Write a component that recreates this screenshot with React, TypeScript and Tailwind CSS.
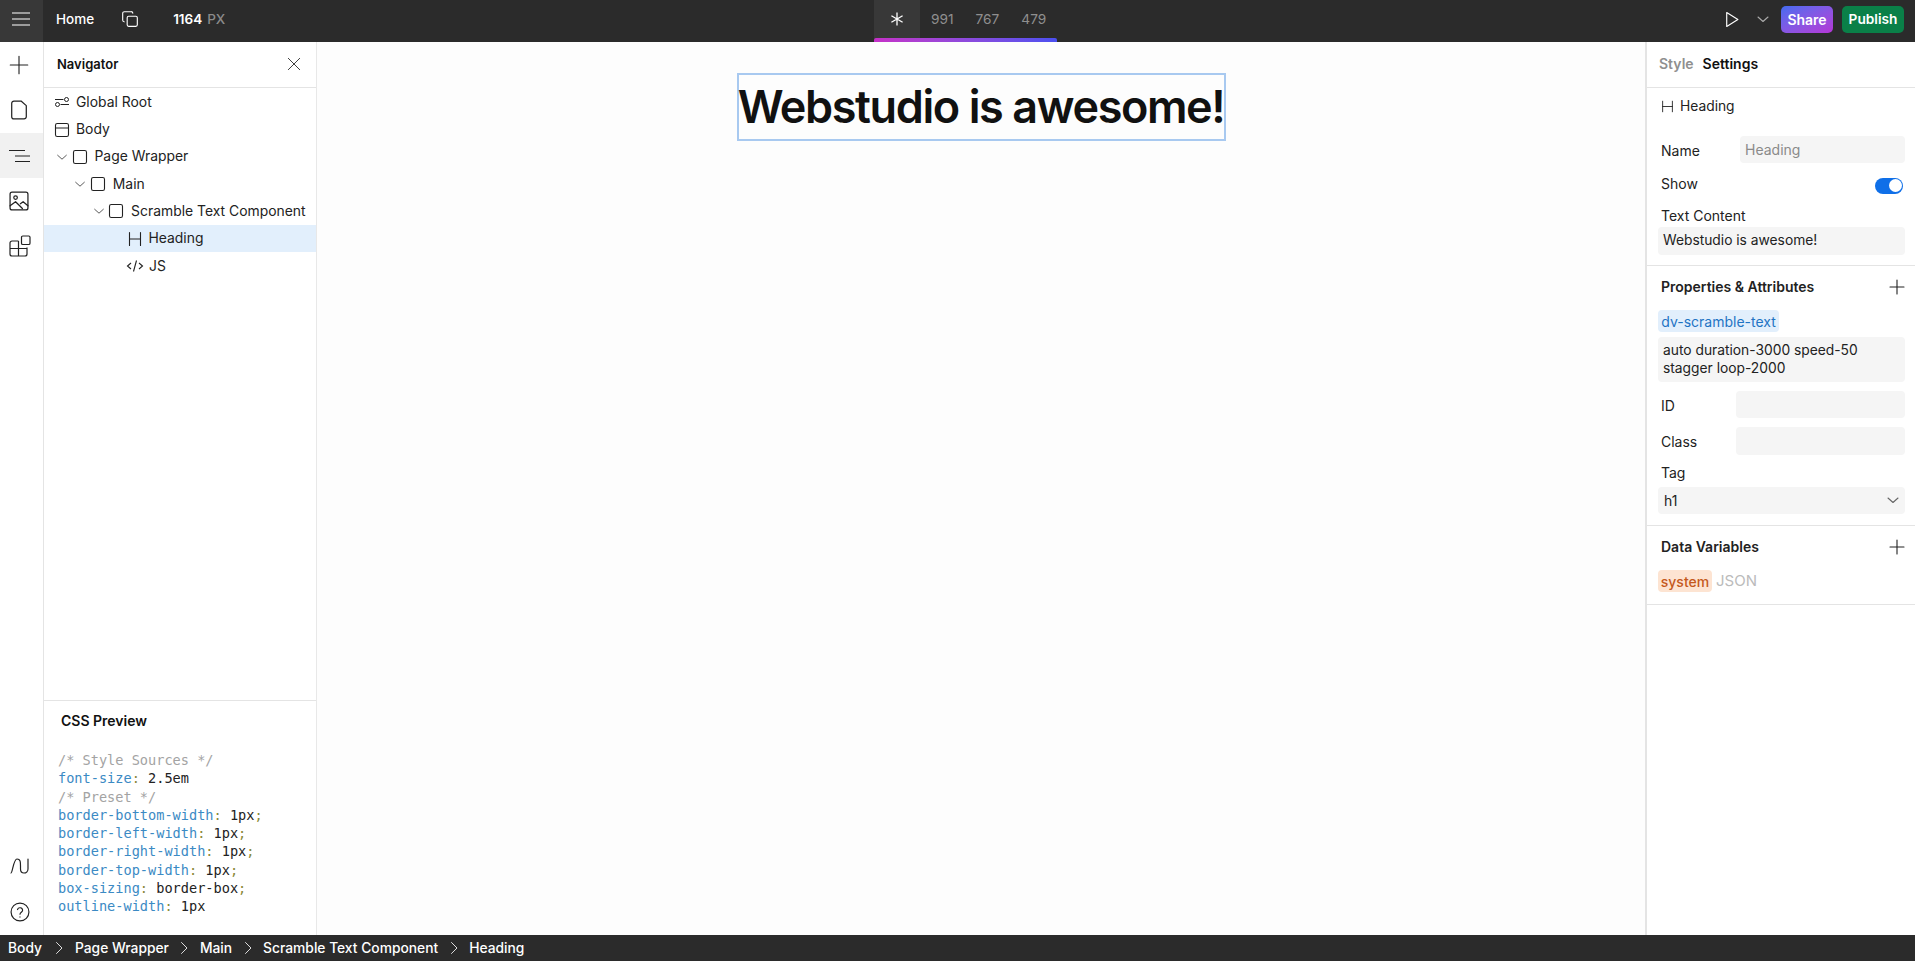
import React from "react";

const S = ({ children, size = 16, className = "", sw = 1 }: { children: React.ReactNode; size?: number; className?: string; sw?: number }) => (
  <svg width={size} height={size} viewBox="0 0 16 16" fill="none" stroke="currentColor" strokeWidth={sw} strokeLinecap="round" strokeLinejoin="round" className={className + " shrink-0"}>
    {children}
  </svg>
);

const Chev = ({ className = "", size = 14 }: { className?: string; size?: number }) => (
  <S size={size} className={className} sw={1.1}><path d="M3 6l5 4.5L13 6" /></S>
);
const Box = () => <S size={16} sw={1.1}><rect x="1.5" y="1.5" width="13" height="13" rx="1.8" /></S>;
const HIcon = () => <S size={16} sw={1.1}><path d="M2.5 1.5v13M13.5 1.5v13M2.5 8h11" /></S>;

function Row({ indent, chev, icon, label, active, gap = 6 }: { indent: number; chev?: boolean; icon: React.ReactNode; label: string; active?: boolean; gap?: number }) {
  return (
    <div className={"flex h-[27.3px] items-center " + (active ? "bg-[#e2effc]" : "")} style={{ paddingLeft: indent }}>
      {chev && <Chev className="mr-[2.5px] text-[#555]" />}
      {icon}
      <span className="whitespace-nowrap text-[13.9px] text-[#222]" style={{ marginLeft: gap }}>{label}</span>
    </div>
  );
}

function CssLine({ p, v, semi }: { p: string; v: string; semi?: boolean }) {
  return (
    <div className="h-[18.25px] whitespace-pre">
      <span className="text-[#3b8ac4]">{p}</span>
      <span className="text-[#8a8a3a]">: </span>
      <span className="text-[#222]">{v}</span>
      {semi && <span className="text-[#8a8a3a]">;</span>}
    </div>
  );
}

const Crumb = ({ t }: { t: string }) => <span className="whitespace-nowrap">{t}</span>;
const CrumbSep = () => (
  <S size={16} className="mx-[7.5px] text-[#ddd]" sw={1}><path d="M5.5 2.5L11 8l-5.5 5.5" /></S>
);

const PlusIcon = ({ className = "" }: { className?: string }) => (
  <S size={16} className={className} sw={1.1}><path d="M8 1v14M1 8h14" /></S>
);

export default function App() {
  return (
    <div className="flex h-[961px] w-[1915px] flex-col overflow-hidden bg-white text-[14px] text-[#222]" style={{ fontFamily: "Inter, sans-serif" }}>
      {/* Top bar */}
      <div className="flex h-[42px] shrink-0 items-stretch bg-[#2b2b2b] text-white">
        <div className="flex w-[874px] shrink-0 items-center">
          <div className="flex h-full w-[43px] items-center justify-center bg-[#383838] pb-[5px] pr-[2px]">
            <svg width="20" height="16" viewBox="0 0 20 16" fill="none" stroke="currentColor" strokeWidth="1.2"><path d="M1 2h18M1 8h18M1 14h18" /></svg>
          </div>
          <div className="flex h-full items-center pb-[4px]">
            <span className="ml-[13px] text-[13.5px] font-medium">Home</span>
            <S size={18} className="ml-[27px]" sw={1}>
              <rect x="5.5" y="5.5" width="9" height="9" rx="1.3" />
              <path d="M2.8 10.5A1.5 1.5 0 0 1 1.5 9V3A1.5 1.5 0 0 1 3 1.5h6a1.5 1.5 0 0 1 1.5 1.3" />
            </S>
            <span className="ml-[34px] text-[13.5px] font-semibold">1164</span>
            <span className="ml-[5px] text-[13.5px] font-medium text-[#8a8a8a]">PX</span>
          </div>
        </div>
        <div className="relative flex w-[183px] shrink-0 items-stretch">
          <div className="flex w-[46px] items-center justify-center bg-[#383838] pb-[4px]">
            <svg width="14" height="14" viewBox="0 0 14 14" fill="none" stroke="white" strokeWidth="1.3"><path d="M7 .5v13M1.4 3.7l11.2 6.6M12.6 3.7L1.4 10.3" /></svg>
          </div>
          <div className="flex items-center gap-[22px] pb-[4px] pl-[11px] text-[13.7px] text-[#8f8f8f]">
            <span>991</span><span>767</span><span>479</span>
          </div>
          <div className="absolute inset-x-0 bottom-0 h-[4px] rounded-t-[2px] bg-gradient-to-r from-[#c52fc8] to-[#4a4ff0]" />
        </div>
        <div className="flex flex-1 items-center justify-end pb-[4px] pr-[11px]">
          <S size={17} sw={1.1}><path d="M3.5 1.5v13L14 8z" /></S>
          <Chev size={16} className="ml-[15px] text-[#aaa]" />
          <div className="ml-[10px] flex h-[27px] w-[52px] items-center justify-center rounded-[5px] bg-gradient-to-br from-[#3f6bf0] to-[#b433d6] text-[14px] font-semibold">Share</div>
          <div className="ml-[9px] flex h-[27px] w-[62px] items-center justify-center rounded-[5px] bg-[#0a8048] text-[13.7px] font-semibold">Publish</div>
        </div>
      </div>

      {/* Middle */}
      <div className="flex min-h-0 flex-1">
        {/* Rail */}
        <div className="flex w-[44px] shrink-0 flex-col border-r border-[#e4e4e4] bg-white text-[#222]">
          <div className="flex h-[45px] items-center justify-center pr-[5px]"><S size={20} sw={0.9}><path d="M8 1v14M1 8h14" /></S></div>
          <div className="flex h-[46px] items-center justify-center pr-[5px]"><S size={22} sw={0.9}><path d="M9.5 1.5H4.3A1.6 1.6 0 0 0 2.7 3.1v9.8a1.6 1.6 0 0 0 1.6 1.6h7.4a1.6 1.6 0 0 0 1.6-1.6V4.8z" /></S></div>
          <div className="flex h-[45px] items-center justify-center bg-[#f1f1f1] pr-[3px]">
            <svg width="22" height="14" viewBox="0 0 22 14" fill="none" stroke="currentColor" strokeWidth="1.1"><path d="M0 1.5h16M6 7h15M6 12.5h15" /></svg>
          </div>
          <div className="flex h-[45px] items-center justify-center pr-[5px]"><S size={22} sw={0.9}><rect x="1.5" y="1.5" width="13" height="13" rx="1.5" /><circle cx="5.5" cy="5.5" r="1.3" /><path d="M1.5 11.5L5.5 8.5l5 5M9 10l2-1.5 3.5 3" /></S></div>
          <div className="flex h-[45px] items-center justify-center pr-[3px]">
            <svg width="22" height="22" viewBox="0 0 22 22" fill="none" stroke="currentColor" strokeWidth="1.2" strokeLinejoin="round">
              <path d="M9.5 6H3a2 2 0 0 0-2 2v11a2 2 0 0 0 2 2h13a2 2 0 0 0 2-2v-6.5M1 13.5h17M9.5 6v15" />
              <rect x="12.5" y="1" width="8.5" height="8.5" rx="1.3" />
            </svg>
          </div>
          <div className="flex-1" />
          <div className="flex h-[45px] items-center justify-center pb-[4px] pr-[4px]"><svg width="20" height="16" viewBox="0 0 20 16" fill="none" stroke="currentColor" strokeWidth="1.2" strokeLinecap="round"><path d="M1 15C2.5 15 3.5 1 7 1s3.5 3 3.5 7v3c0 2.5 1.5 4 3.5 4s4-1.5 4-4V1" /></svg></div>
          <div className="flex h-[45px] items-center justify-center pb-[2px] pr-[4px]"><S size={22} sw={0.85}><circle cx="8" cy="8" r="6.5" /><path d="M6.2 6.2A1.9 1.9 0 0 1 9.9 6.8c0 1.2-1.9 1.6-1.9 2.8M8 11.6v.1" /></S></div>
        </div>

        {/* Navigator */}
        <div className="flex w-[273px] shrink-0 flex-col border-r border-[#e8e8e8] bg-white">
          <div className="flex h-[46px] shrink-0 items-center justify-between border-b border-[#e4e4e4] pl-[13px] pr-[15px]">
            <span className="text-[13px] font-semibold text-[#111]">Navigator</span>
            <S size={14} sw={1} className="mb-[2px]"><path d="M1.5 1.5l13 13M14.5 1.5l-13 13" /></S>
          </div>
          <div className="flex flex-col pt-[0.6px]">
            <Row indent={10} icon={<svg width="16" height="12" viewBox="0 0 16 12" fill="none" stroke="currentColor" className="shrink-0"><path d="M1 3.5h8.5M6.5 8.5h8.5" /><circle cx="12.5" cy="3.5" r="2" /><circle cx="3.5" cy="8.5" r="2" /></svg>} label="Global Root" />
            <Row indent={10} icon={<S size={16} sw={1.1}><rect x="1.5" y="1.5" width="13" height="13" rx="1.8" /><path d="M1.5 6h13" /></S>} label="Body" />
            <Row indent={11} chev icon={<Box />} label="Page Wrapper" gap={7} />
            <Row indent={29.3} chev icon={<Box />} label="Main" gap={7} />
            <Row indent={47.6} chev icon={<Box />} label="Scramble Text Component" gap={7} />
            <Row indent={82.5} active icon={<HIcon />} label="Heading" />
            <Row indent={82} icon={<svg width="18" height="14" viewBox="0 0 18 14" fill="none" stroke="currentColor" strokeWidth="1.1" className="shrink-0"><path d="M5 4L1.5 7 5 10M13 4l3.5 3L13 10M10.5 1.5l-3 11" /></svg>} label="JS" gap={5} />
          </div>
          <div className="flex-1" />
          <div className="flex h-[235px] shrink-0 flex-col border-t border-[#e4e4e4]">
            <div className="pl-[17px] pt-[12px] text-[14px] font-semibold leading-[16px] text-[#111]">CSS Preview</div>
            <div className="pl-[14px] pt-[22px] text-[13.6px] leading-[18.25px]" style={{ fontFamily: '"DejaVu Sans Mono", monospace' }}>
              <div className="h-[18.25px] whitespace-pre text-[#a3a3a3]">/* Style Sources */</div>
              <CssLine p="font-size" v="2.5em" />
              <div className="h-[18.25px] whitespace-pre text-[#a3a3a3]">/* Preset */</div>
              <CssLine p="border-bottom-width" v="1px" semi />
              <CssLine p="border-left-width" v="1px" semi />
              <CssLine p="border-right-width" v="1px" semi />
              <CssLine p="border-top-width" v="1px" semi />
              <CssLine p="box-sizing" v="border-box" semi />
              <CssLine p="outline-width" v="1px" />
            </div>
          </div>
        </div>

        {/* Canvas */}
        <div className="flex min-w-0 flex-1 justify-center bg-[#fdfdfd] pt-[31px]">
          <div className="flex h-[68px] w-[489px] shrink-0 items-center justify-center border-2 border-[#a8c9f0]">
            <h1 className="whitespace-nowrap text-[45px] font-semibold leading-[54px] tracking-[-1.4px] text-[#111]">Webstudio is awesome!</h1>
          </div>
        </div>

        {/* Right panel */}
        <div className="flex w-[270px] shrink-0 flex-col border-l-2 border-[#e4e4e4] bg-white">
          <div className="flex h-[46px] shrink-0 items-center gap-[9px] border-b border-[#e4e4e4] pb-[2px] pl-[12px]">
            <span className="text-[14px] font-semibold text-[#8f8f8f]">Style</span>
            <span className="text-[14px] font-semibold text-[#111]">Settings</span>
          </div>
          <div className="flex h-[178px] shrink-0 flex-col border-b border-[#e4e4e4] pl-[11px] pr-[10px]">
            <div className="flex h-[37px] items-center gap-[6px] pl-[3px] text-[13.8px]">
              <S size={13} sw={1.1}><path d="M2 1.5v13M14 1.5v13M2 8h12" /></S>
              <span>Heading</span>
            </div>
            <div className="mt-[11px] flex h-[27px] items-center">
              <span className="w-[82px] pl-[3px] pt-[2px]">Name</span>
              <div className="flex h-[27px] flex-1 items-center rounded-[4px] bg-[#f5f5f5] px-[5px] text-[#8a8a8a]">Heading</div>
            </div>
            <div className="mt-[7px] flex h-[27px] items-center justify-between pr-[2px]">
              <span className="pl-[3px]">Show</span>
              <div className="mt-[4px] flex h-[16px] w-[28px] items-center justify-end rounded-full bg-[#0f6fe8] pr-[1.5px]"><div className="size-[13px] rounded-full bg-white" /></div>
            </div>
            <div className="pl-[3px] pt-[10px] leading-[17px]">Text Content</div>
            <div className="mt-[3px] flex h-[28px] items-center rounded-[4px] bg-[#f5f5f5] px-[5px] pb-[2px] text-[13.8px]">Webstudio is awesome!</div>
          </div>
          <div className="flex h-[260px] shrink-0 flex-col border-b border-[#e4e4e4] pl-[11px] pr-[10px]">
            <div className="flex h-[43px] shrink-0 items-center justify-between pb-[2px] pl-[3px]">
              <span className="font-semibold">Properties &amp; Attributes</span>
              <PlusIcon />
            </div>
            <div className="mt-[1px] flex h-[22px] w-[121px] items-center justify-center rounded-[4px] bg-[#e2effc] text-[#1f74c4]">dv-scramble-text</div>
            <div className="mt-[5px] h-[45px] rounded-[4px] bg-[#f5f5f5] px-[5px] pt-[4px] text-[13.8px] leading-[18px]">auto duration-3000 speed-50<br />stagger loop-2000</div>
            <div className="mt-[9px] flex h-[27px] items-center"><span className="w-[78px] pl-[3px] pt-[2px]">ID</span><div className="h-full flex-1 rounded-[4px] bg-[#f5f5f5]" /></div>
            <div className="mt-[9px] flex h-[28px] items-center"><span className="w-[78px] pl-[3px]">Class</span><div className="h-full flex-1 rounded-[4px] bg-[#f5f5f5]" /></div>
            <div className="mt-[10px] pl-[3px] leading-[16px]">Tag</div>
            <div className="mt-[6px] flex h-[27px] items-center justify-between rounded-[4px] bg-[#f5f5f5] pb-[1px] pl-[6px] pr-[4px]">
              <span>h1</span>
              <Chev size={16} className="text-[#666]" />
            </div>
          </div>
          <div className="flex h-[79px] shrink-0 flex-col border-b border-[#e4e4e4] pl-[11px] pr-[10px]">
            <div className="flex h-[43px] shrink-0 items-center justify-between pb-[2px] pl-[3px]">
              <span className="font-semibold">Data Variables</span>
              <PlusIcon />
            </div>
            <div className="mt-[1px] flex items-center gap-[4px]">
              <span className="flex h-[22px] w-[54px] items-center justify-center rounded-[4px] bg-[#fde4d2] font-medium text-[#c4581c]">system</span>
              <span className="text-[15px] text-[#bbb]">JSON</span>
            </div>
          </div>
        </div>
      </div>

      {/* Status bar */}
      <div className="flex h-[26px] shrink-0 items-center bg-[#2b2b2b] pl-[8px] text-[13.8px] font-medium text-white">
        <span className="mr-[2px]"><Crumb t="Body" /></span><CrumbSep /><Crumb t="Page Wrapper" /><CrumbSep /><Crumb t="Main" /><CrumbSep /><Crumb t="Scramble Text Component" /><CrumbSep /><Crumb t="Heading" />
      </div>
    </div>
  );
}
